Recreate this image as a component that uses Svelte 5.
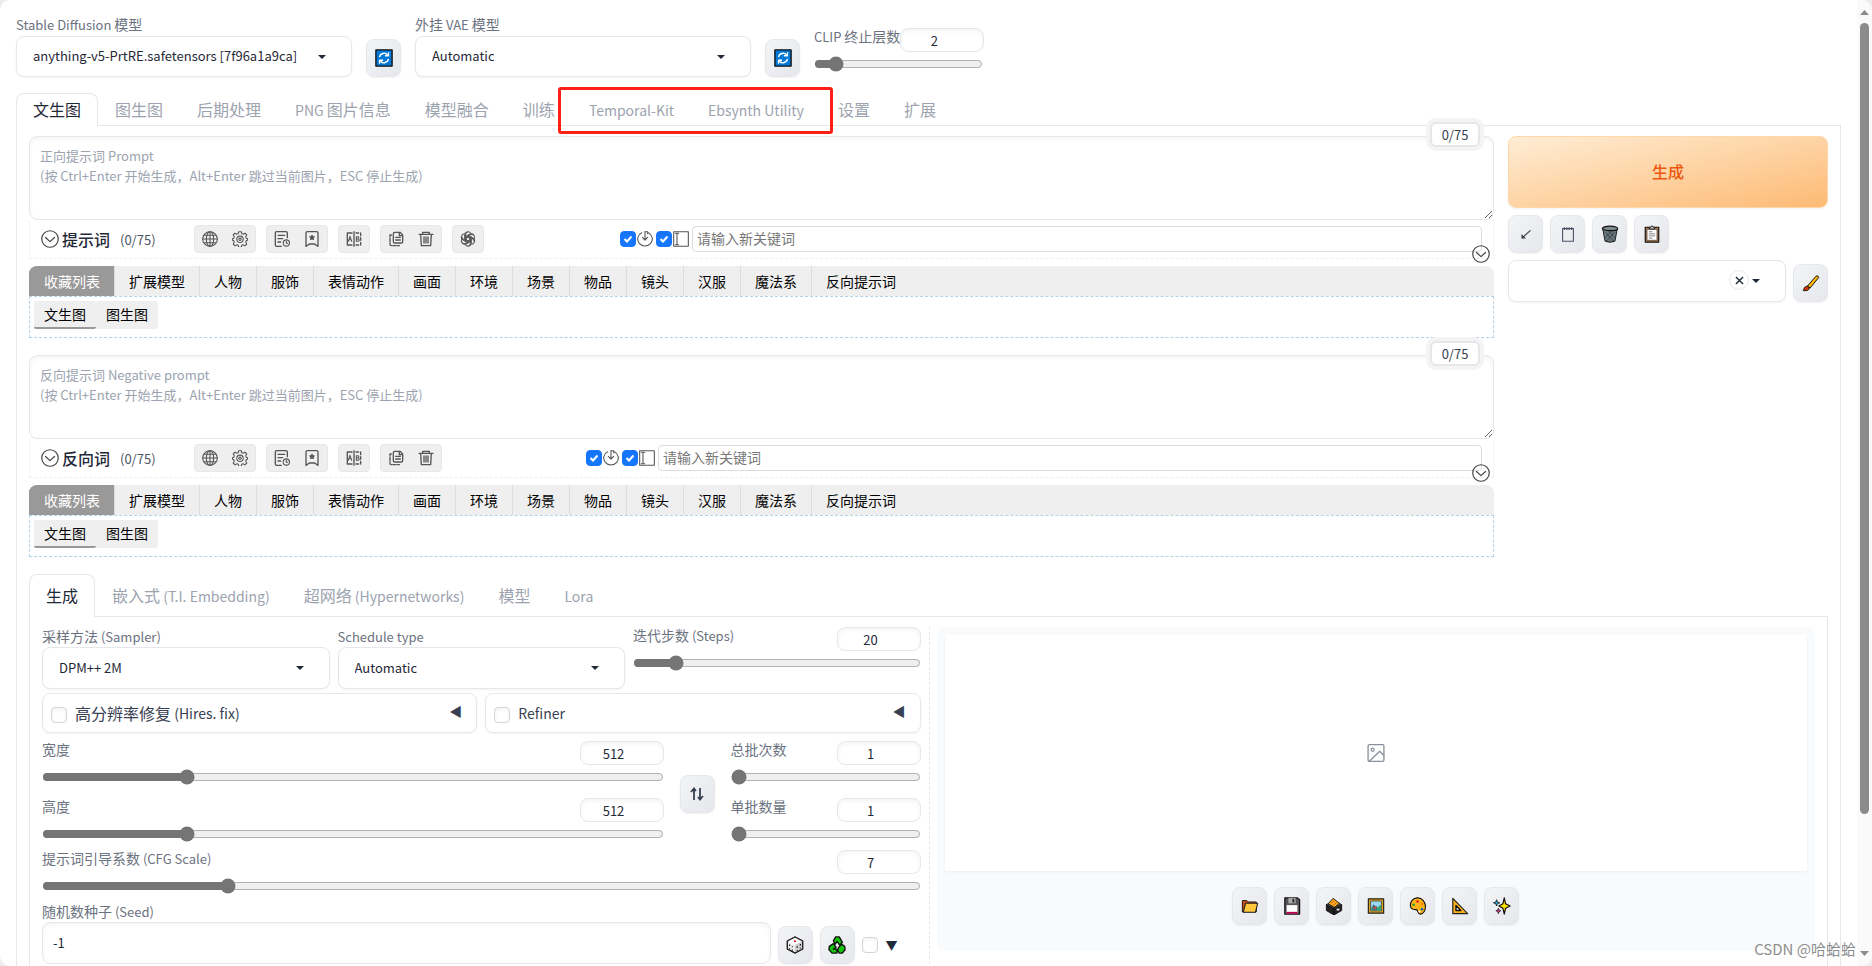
<script lang="ts">
  type PromptBlock = {
    id: string;
    title: string;
    placeholder: string;
    tools: string[][];
  };

  const hint = "(按 Ctrl+Enter 开始生成，Alt+Enter 跳过当前图片，ESC 停止生成)";

  const mainTabs = [
    "文生图", "图生图", "后期处理", "PNG 图片信息", "模型融合", "训练",
    "Temporal-Kit", "Ebsynth Utility", "设置", "扩展",
  ];
  const extraTabs = ["生成", "嵌入式 (T.I. Embedding)", "超网络 (Hypernetworks)", "模型", "Lora"];

  const groups = [
    "收藏列表", "扩展模型", "人物", "服饰", "表情动作", "画面", "环境",
    "场景", "物品", "镜头", "汉服", "魔法系", "反向提示词",
  ];
  const subGroups = ["文生图", "图生图"];

  const baseTools = [["globe", "gear"], ["history", "bookmark"], ["translate"], ["copy", "trash"]];

  const prompts: PromptBlock[] = [
    { id: "positive", title: "提示词", placeholder: "正向提示词 Prompt\n" + hint, tools: [...baseTools, ["openai"]] },
    { id: "negative", title: "反向词", placeholder: "反向提示词 Negative prompt\n" + hint, tools: baseTools },
  ];

  const promptActions = [
    { icon: "arrow", title: "读取上次参数" },
    { icon: "notepad", title: "额外网络" },
    { icon: "bin", title: "清空提示词" },
    { icon: "clipboard", title: "应用预设" },
  ];

  const galleryActions = [
    { icon: "folder", title: "打开输出目录" },
    { icon: "floppy", title: "保存图片" },
    { icon: "archive", title: "打包下载" },
    { icon: "picture", title: "发送到图生图" },
    { icon: "palette", title: "发送到重绘" },
    { icon: "ruler", title: "发送到后期处理" },
    { icon: "sparkles", title: "高清修复" },
  ];

  let activeTab = $state("文生图");
  let activeExtra = $state("生成");
  let clipSkip = $state(2);
  let steps = $state(20);
  let width = $state(512);
  let height = $state(512);
  let batchCount = $state(1);
  let batchSize = $state(1);
  let cfgScale = $state(7);
  let seed = $state("-1");

  function swapSize() {
    [width, height] = [height, width];
  }
</script>

<!-- Latin runs sit one step smaller than the Han characters beside them -->
{#snippet mixed(text: string)}
  {#each text.split(/([\x20-\x7e]+)/).filter(Boolean) as part}{#if /^[\x20-\x7e]+$/.test(part)}<span class="latin">{part}</span>{:else}{part}{/if}{/each}
{/snippet}

{#snippet lineIcon(name: string)}
  <svg class="line-icon" viewBox="0 0 24 24" fill="none" stroke="currentColor" stroke-width="1.6" stroke-linecap="round" stroke-linejoin="round" aria-hidden="true">
    {#if name === "globe"}
      <circle cx="12" cy="12" r="11" />
      <ellipse cx="12" cy="12" rx="5.5" ry="11" />
      <path d="M12 1v22M1 12h22M3 6.5h18M3 17.5h18" />
    {:else if name === "gear"}
      <path d="M10 1h4l.6 3 2.2.9 2.6-1.7 2.8 2.8-1.7 2.6.9 2.2 1.9.7v2.500l-1.900.700-.9 2.200 1.700 2.600-2.800 2.800-2.600-1.700-2.200.9-.6 3h-4l-.6-3-2.200-.9-2.600 1.700-2.800-2.800 1.700-2.600-.9-2.200-1.900-.7v-2.500l1.900-.7.9-2.200-1.700-2.600 2.800-2.800 2.600 1.700 2.200-.9z" />
      <circle cx="12" cy="12.500" r="4.8" />
      <circle cx="12" cy="12.500" r="1.8" />
    {:else if name === "history"}
      <path d="M20 10V3a2 2 0 0 0-2-2H4a2 2 0 0 0-2 2v18a2 2 0 0 0 2 2h7" stroke-width="2" />
      <path d="M6 6.5h10M6 11.5h7M6 16.5h4" stroke-width="2" />
      <circle cx="18.5" cy="18" r="4.7" />
      <path d="M18.5 15.5V18.5h2.2" />
    {:else if name === "bookmark"}
      <path d="M3 3a2 2 0 0 1 2-2h14a2 2 0 0 1 2 2v20l-5-3.5h-8L3 23z" stroke-width="2" />
      <path d="M12 6.500l1 2 2.300.3-1.600 1.600.4 2.300-2.100-1.100-2.100 1.100.4-2.300-1.600-1.600 2.300-.3z" fill="currentColor" />
    {:else if name === "translate"}
      <path d="M9 3H2v18h7M12 1v22" stroke-width="2" />
      <path d="M15 3h7v18h-7" stroke-width="2" stroke-dasharray="4 3" />
      <path d="M3.5 15.5L6 8l2.6 7.5M4.5 13h3.2M15.500 8.500v7h2.500a1.800 1.800 0 0 0 0-3.600h-2.500 2a1.700 1.700 0 0 0 0-3.400z" />
    {:else if name === "copy"}
      <path d="M8 4a2 2 0 0 1 2-2h8l4 4v10a2 2 0 0 1-2 2H10a2 2 0 0 1-2-2zM17 2v5h5M11.5 9.500h7M11.5 13.5h7" stroke-width="2" />
      <path d="M5 6H3v14a2 2 0 0 0 2 2h12" stroke-width="2" stroke-dasharray="5 2" />
    {:else if name === "trash"}
      <path d="M1.5 5h21M7 5V2h10v3M4 5l1 17h14l1-17M9 9v9M12 9v9M15 9v9" stroke-width="2" />
    {:else if name === "openai"}
      {#each [0, 60, 120, 180, 240, 300] as angle}
        <path d="M7 14V6.500a5 5 0 0 1 9-3.200M9.500 13V9l5.500-3.200a5 5 0 0 1 5 0" transform="rotate({angle} 12 12)" />
      {/each}
    {:else if name === "enter"}
      <path d="M7 2.6a11 10.5 0 1 0 10 0" />
      <path d="M12 1v12M8 9.5l4 4 4-4" />
      <path d="M12 1h4v3" />
    {:else if name === "cursor"}
      <path d="M1 1h22v22H1z" />
      <path d="M3.5 3.5h5M3.5 20.5h5M6 3.5v17" />
    {:else if name === "chevron"}
      <circle cx="12" cy="12" r="11" />
      <path d="M6 10l6 5.5 6-5.5" />
    {:else if name === "image"}
      <rect x="2.5" y="2" width="19" height="20" rx="1.5" />
      <circle cx="8" cy="8" r="1.8" />
      <path d="M4 22L16.5 10l5 5" />
    {/if}
  </svg>
{/snippet}

{#snippet emoji(name: string)}
  <svg class="emoji" viewBox="0 0 20 20" stroke-linejoin="round" aria-hidden="true">
    {#if name === "refresh"}
      <rect x="1" y="1" width="18" height="18" fill="#0078d7" stroke="#111" stroke-width="1.5" />
      <path d="M5 9a5.2 5.2 0 0 1 9-2.5M15 11a5.2 5.2 0 0 1-9 2.5" fill="none" stroke="#fff" stroke-width="1.6" />
      <path d="M15 3.5v4h-4M5 16.5v-4h4" fill="none" stroke="#fff" stroke-width="1.4" />
    {:else if name === "arrow"}
      <path d="M15 6L5.500 14.5" fill="none" stroke="#374151" stroke-width="1.3" />
      <path d="M5 10v5h5z" fill="#374151" />
    {:else if name === "notepad"}
      <rect x="4" y="4" width="12" height="14" fill="none" stroke="#4b4f66" stroke-width="1.2" />
      <path d="M6 2.5v3M8.7 2.5v3M11.3 2.5v3M14 2.5v3" stroke="#374151" />
    {:else if name === "bin"}
      <path d="M2 4.500L4.500 18q5.5 2.500 11 0L18 4.500z" fill="#69797e" stroke="#111" />
      <path d="M5 8l9 10M9 7l6 7M15 8L6 18M11 7l-6 7" stroke="#263238" stroke-width=".8" />
      <ellipse cx="10" cy="3.8" rx="8.5" ry="2.5" fill="#7d8b90" stroke="#111" stroke-width="1.3" />
    {:else if name === "clipboard"}
      <rect x="2.5" y="2.5" width="15" height="16.5" fill="#b97a4a" stroke="#111" stroke-width="1.3" />
      <rect x="4.5" y="4.8" width="11" height="12.2" fill="#fff" stroke="#222" stroke-width=".6" />
      <path d="M7 4.5V2.5h1.5L10 .8l1.500 1.700H13v2z" fill="#ccc" stroke="#111" />
      <path d="M6.5 7.5h4M6.5 9.8h7M6.5 12h7M6.5 14.5h4" stroke="#777" />
    {:else if name === "brush"}
      <path d="M6 13.500L15.500 2.500q2.500-1.500 3 1.500L9 15.500z" fill="#ffb900" stroke="#111" stroke-width="1.1" />
      <path d="M1.500 18.500Q2 14 5.500 13.500q2.800.3 2.800 3-2 2.800-6.800 2z" fill="#d83b01" stroke="#111" stroke-width="1" />
    {:else if name === "dice"}
      <path d="M10 1l8.5 4.5v9L10 19l-8.5-4.5v-9z" fill="#eee" stroke="#222" stroke-width="1.3" />
      <path d="M1.5 5.5L10 10l8.5-4.5L10 1z" fill="#fff" />
      <path d="M10 10v9l8.5-4.5v-9z" fill="#ccc" />
      <path d="M10 1l8.5 4.5v9L10 19l-8.5-4.5v-9z" fill="none" stroke="#222" stroke-width="1.3" />
      <ellipse cx="10" cy="5.8" rx="1.3" ry="1" fill="#e81123" />
      <path d="M4 9.5v1.500M7 15v1.500M4 13.5v1M7 11.5v1M12.5 11.5v1.5M16 9v1.5M12.5 15.5v1M16 13v1" stroke="#111" stroke-width="1.3" />
    {:else if name === "recycle"}
      <path d="M6 5.5L8.5 1h4L16 7l-3 3-3-4-2 3zM1.5 11.5L6 8.5l3 4-3 2h4v4.5H4.5L1 15zM18.5 11.5L15 9l-3 3.5-1.5 3L12.5 19H16l3-4z" fill="#16c60c" stroke="#111" stroke-width="1.5" />
    {:else if name === "folder"}
      <path d="M1.5 16.5V4h5l1.5 1.5h9V16.5z" fill="#ca5010" stroke="#111" />
      <path d="M2.5 17L5 7h13.5L16 17z" fill="#ffc83d" stroke="#222" stroke-width="1.2" />
    {:else if name === "floppy"}
      <path d="M2 1h14l2.5 2v16H2z" fill="#555" stroke="#111" stroke-width="1.3" />
      <rect x="6" y="1" width="8" height="6" fill="#aaa" />
      <rect x="10.5" y="2" width="2" height="4" fill="#222" />
      <rect x="4" y="9" width="12" height="9" fill="#fff" />
      <path d="M4 17.5h12" stroke="#c30052" stroke-width="2" />
    {:else if name === "archive"}
      <path d="M1.5 8.5L10 13v7l-8.5-5zM18.5 8.5L10 13v7l8.5-5z" fill="#222" stroke="#111" />
      <path d="M1.5 8.5L10 4l8.5 4.5L10 13z" fill="#555" stroke="#111" />
      <path d="M3.5 7.5L9 1.500l7 5.500-5.5 4.5z" fill="#ffb020" stroke="#111" />
      <path d="M6.5 7l4-3M9 9l4-3" stroke="#ca5010" />
      <rect x="13" y="13" width="3" height="2" fill="#eee" />
    {:else if name === "picture"}
      <rect x="1.5" y="2" width="17" height="16" fill="#e3a51a" stroke="#222" stroke-width="1.3" />
      <rect x="4" y="4.5" width="12" height="11" fill="#9bd8f5" stroke="#333" stroke-width=".8" />
      <path d="M4.5 15v-3l4-2 3 2 3-3 1 1v5z" fill="#30a46c" />
      <path d="M6 15v-5l1.500-2 1.500 2h2v5z" fill="#5d6570" />
      <path d="M8 11h2v2H8z" fill="#e74856" />
    {:else if name === "palette"}
      <path d="M9 1C4 1.5 1 5.5 1.500 10s4.5 4 6.5 4 1.5 5 4.5 5c4 0 6-4.5 5.8-9S14.500.5 9 1z" fill="#ffb31a" stroke="#111" stroke-width="1.2" />
      <circle cx="5" cy="8.5" r="1.4" fill="#16a020" />
      <circle cx="9.5" cy="5" r="1.4" fill="#e81123" />
      <circle cx="14.5" cy="7.5" r="1.3" fill="#ff7b00" />
      <circle cx="14.5" cy="13.5" r="1.4" fill="#0063b1" />
      <circle cx="11.5" cy="16" r="1.1" fill="#fff" />
    {:else if name === "ruler"}
      <path d="M2 1.5v17h16.5z" fill="#ffb31a" stroke="#222" stroke-width="1.3" />
      <path d="M5.5 9.5v5.5h5.5z" fill="#eee" stroke="#111" stroke-width="1.5" />
    {:else if name === "sparkles"}
      <path d="M12.5 1l1.500 6.500 5 2.500-5 2.500-1.500 6.500-1.500-6.500L6.500 10l4.500-2.500z" fill="#fce100" stroke="#111" stroke-width="1.3" />
      <path d="M4 3l.9 2.600L7.500 6.500l-2.600.9L4 10l-.9-2.600L.5 6.500l2.600-.9z" fill="#31b6e7" stroke="#111" stroke-width=".9" />
      <path d="M6 12.5l.8 2 2 .8-2 .8-.8 2.400-.8-2.400-2-.8 2-.8z" fill="#e3a" stroke="#111" stroke-width=".8" />
    {/if}
  </svg>
{/snippet}

{#snippet toolButton(icon: string, title: string)}
  <button class="tool" type="button" {title} aria-label={title}>{@render emoji(icon)}</button>
{/snippet}

{#snippet dropdown(id: string, label: string, value: string)}
  <div class="field">
    <label for={id}>{@render mixed(label)}</label>
    <div class="select-wrap">
      <select {id}><option>{value}</option></select>
      <svg class="caret" viewBox="0 0 8 4" aria-hidden="true"><path d="M0 0h8L4 4z" /></svg>
    </div>
  </div>
{/snippet}

<div class="window">
  <main>
    <header class="quick">
      {@render dropdown("sd-model", "Stable Diffusion 模型", "anything-v5-PrtRE.safetensors [7f96a1a9ca]")}
      {@render toolButton("refresh", "刷新模型")}
      {@render dropdown("sd-vae", "外挂 VAE 模型", "Automatic")}
      {@render toolButton("refresh", "刷新 VAE")}
      <div class="slider clip">
        <div class="slider-head">
          <label for="clip-skip">{@render mixed("CLIP 终止层数")}</label>
          <input id="clip-skip" class="number" type="text" bind:value={clipSkip} />
        </div>
        <input type="range" min="1" max="12" bind:value={clipSkip} aria-label="CLIP 终止层数" />
      </div>
    </header>

    <nav class="tabs">
      {#each mainTabs as tab}
        <button type="button" class:active={tab === activeTab} onclick={() => (activeTab = tab)}>{@render mixed(tab)}</button>
      {/each}
      <span class="marker"></span>
    </nav>

    <div class="panel">
      <div class="top">
        <div class="prompts">
          {#each prompts as block (block.id)}
            <section class="prompt {block.id}">
              <span class="counter">0/75</span>
              <textarea placeholder={block.placeholder} aria-label={block.title}></textarea>
              <div class="bar">
                <div class="bar-title">
                  {@render lineIcon("chevron")}
                  <strong>{block.title}</strong>
                  <span>(0/75)</span>
                </div>
                {#each block.tools as group}
                  <div class="tool-group">
                    {#each group as name}
                      <button type="button" aria-label={name}>{@render lineIcon(name)}</button>
                    {/each}
                  </div>
                {/each}
                <div class="entry">
                  <input type="checkbox" checked aria-label="回车添加" />
                  {@render lineIcon("enter")}
                  <input type="checkbox" checked aria-label="自动输入" />
                  {@render lineIcon("cursor")}
                  <input class="keyword" type="text" placeholder="请输入新关键词" aria-label="请输入新关键词" />
                </div>
                <button class="fold" type="button" aria-label="展开">{@render lineIcon("chevron")}</button>
              </div>
              <div class="group-tabs">
                {#each groups as group, i}
                  <button type="button" class:active={i === 0}>{group}</button>
                {/each}
              </div>
              <div class="group-body">
                {#each subGroups as sub, i}
                  <button type="button" class:active={i === 0}>{sub}</button>
                {/each}
              </div>
            </section>
          {/each}
        </div>

        <aside class="actions">
          <button class="generate" type="button">生成</button>
          <div class="tool-row">
            {#each promptActions as action}
              {@render toolButton(action.icon, action.title)}
            {/each}
          </div>
          <div class="styles">
            <div class="select-wrap">
              <select aria-label="预设样式"><option></option></select>
              <button class="clear" type="button" aria-label="清除">
                <svg viewBox="0 0 10 10" aria-hidden="true"><path d="M1 1l8 8M9 1L1 9" /></svg>
              </button>
              <svg class="caret" viewBox="0 0 8 4" aria-hidden="true"><path d="M0 0h8L4 4z" /></svg>
            </div>
            {@render toolButton("brush", "编辑预设样式")}
          </div>
        </aside>
      </div>

      <nav class="tabs tall">
        {#each extraTabs as tab}
          <button type="button" class:active={tab === activeExtra} onclick={() => (activeExtra = tab)}>{@render mixed(tab)}</button>
        {/each}
      </nav>

      <div class="panel inner">
        <div class="settings">
          <div class="compact">
            <div class="thirds">
              {@render dropdown("sampler", "采样方法 (Sampler)", "DPM++ 2M")}
              {@render dropdown("scheduler", "Schedule type", "Automatic")}
              <div class="slider">
                <div class="slider-head">
                  <label for="steps">{@render mixed("迭代步数 (Steps)")}</label>
                  <input id="steps" class="number" type="text" bind:value={steps} />
                </div>
                <input type="range" min="1" max="150" bind:value={steps} aria-label="Steps" />
              </div>
            </div>
            <div class="halves">
              <div class="accordion">
                <label><input class="box" type="checkbox" />{@render mixed("高分辨率修复 (Hires. fix)")}</label>
                <button type="button" aria-label="展开">◀</button>
              </div>
              <div class="accordion">
                <label><input class="box" type="checkbox" />{@render mixed("Refiner")}</label>
                <button type="button" aria-label="展开">◀</button>
              </div>
            </div>
          </div>

          <div class="size">
            <div class="pair">
              <div class="slider">
                <div class="slider-head">
                  <label for="width">宽度</label>
                  <input id="width" class="number" type="text" bind:value={width} />
                </div>
                <input type="range" min="64" max="2048" step="8" bind:value={width} aria-label="宽度" />
              </div>
              <div class="slider">
                <div class="slider-head">
                  <label for="height">高度</label>
                  <input id="height" class="number" type="text" bind:value={height} />
                </div>
                <input type="range" min="64" max="2048" step="8" bind:value={height} aria-label="高度" />
              </div>
            </div>
            <button class="tool" type="button" title="交换宽高" aria-label="交换宽高" onclick={swapSize}>
              <svg class="swap" viewBox="0 0 14 14" aria-hidden="true"><path d="M4 13V2M1 5l3-3.5L6 4M10 1v11M13 9l-3 3.5L8 10" /></svg>
            </button>
            <div class="pair batch">
              <div class="slider">
                <div class="slider-head">
                  <label for="batch-count">总批次数</label>
                  <input id="batch-count" class="number" type="text" bind:value={batchCount} />
                </div>
                <input type="range" min="1" max="100" bind:value={batchCount} aria-label="总批次数" />
              </div>
              <div class="slider">
                <div class="slider-head">
                  <label for="batch-size">单批数量</label>
                  <input id="batch-size" class="number" type="text" bind:value={batchSize} />
                </div>
                <input type="range" min="1" max="8" bind:value={batchSize} aria-label="单批数量" />
              </div>
            </div>
          </div>

          <div class="slider">
            <div class="slider-head">
              <label for="cfg">{@render mixed("提示词引导系数 (CFG Scale)")}</label>
              <input id="cfg" class="number" type="text" bind:value={cfgScale} />
            </div>
            <input type="range" min="1" max="30" step="0.5" bind:value={cfgScale} aria-label="CFG Scale" />
          </div>

          <div class="field">
            <label for="seed">{@render mixed("随机数种子 (Seed)")}</label>
            <div class="seed-row">
              <input id="seed" class="text" type="text" bind:value={seed} />
              {@render toolButton("dice", "随机种子")}
              {@render toolButton("recycle", "沿用上次种子")}
              <label class="extra"><input class="box" type="checkbox" aria-label="更多种子选项" /><span>▼</span></label>
            </div>
          </div>
        </div>

        <div class="gallery">
          <div class="preview">{@render lineIcon("image")}</div>
          <div class="gallery-tools">
            {#each galleryActions as action}
              {@render toolButton(action.icon, action.title)}
            {/each}
          </div>
        </div>
      </div>
    </div>
  </main>

  <div class="scrollbar">
    <svg viewBox="0 0 9 5" aria-hidden="true"><path d="M0 5h9L4.5 0z" /></svg>
    <div class="thumb-track"><div class="thumb"></div></div>
    <svg viewBox="0 0 9 5" aria-hidden="true"><path d="M0 0h9L4.5 5z" /></svg>
  </div>
  <div class="watermark">CSDN @哈蛤蛤</div>
</div>

<style>
  :global(body) {
    background: #ececec;
    overflow: hidden;
  }

  .window {
    position: relative;
    display: flex;
    height: 100vh;
    overflow: hidden;
    border-radius: 10px;
    background: #fff;
    color: #1f2937;
    font-family: "Noto Sans CJK SC", "Noto Sans", sans-serif;
    font-size: 14px;
  }

  .window * {
    box-sizing: border-box;
  }

  main {
    flex: 1;
    min-width: 0;
    display: flex;
    flex-direction: column;
    padding: 15px 16px 0;
  }

  button, input, select, textarea {
    font-family: inherit;
    font-size: 14px;
    color: inherit;
    margin: 0;
  }

  button {
    border: none;
    background: none;
    padding: 0;
    cursor: pointer;
  }

  label {
    color: #6b7280;
    line-height: 18px;
    white-space: nowrap;
  }

  .latin {
    font-size: 13px;
    line-height: 1;
    white-space: pre;
  }

  .line-icon {
    width: 16px;
    height: 16px;
    flex: none;
    display: block;
    color: #555;
  }

  .emoji {
    width: 18px;
    height: 18px;
    display: block;
  }

  /* header */
  .quick {
    display: flex;
    align-items: flex-end;
    gap: 14px;
    margin-bottom: 16px;
  }

  .quick .field {
    flex: 0 0 336px;
  }

  .quick select {
    height: 41px;
  }

  .clip {
    width: 169px;
    align-self: flex-start;
    margin-top: 13px;
  }

  .field label {
    display: block;
    height: 18px;
    margin-bottom: 2px;
  }

  .quick .field label {
    margin-bottom: 3px;
  }

  .select-wrap {
    position: relative;
    flex: 1;
  }

  select, .text {
    width: 100%;
    height: 42px;
    padding: 0 16px 2px;
    border: 1px solid #e5e7eb;
    border-radius: 8px;
    background: #fff;
    box-shadow: 0 1px 2px rgba(0, 0, 0, 0.05);
    appearance: none;
    font-size: 13px;
    display: block;
  }

  .text {
    padding: 0 10px 2px;
    box-shadow: inset 0 2px 4px rgba(0, 0, 0, 0.05);
  }

  .caret {
    position: absolute;
    right: 26px;
    top: 19px;
    width: 8px;
    height: 4px;
    fill: #1f2937;
    pointer-events: none;
  }

  .tool {
    width: 35px;
    height: 38px;
    flex: none;
    display: flex;
    align-items: center;
    justify-content: center;
    border: 1px solid #e5e7eb;
    border-radius: 8px;
    background: linear-gradient(to bottom right, #f3f4f6, #e5e7eb);
    box-shadow: 0 1px 2px rgba(0, 0, 0, 0.05);
  }

  .slider-head {
    display: flex;
    justify-content: space-between;
    align-items: flex-start;
    height: 24px;
  }

  .slider-head label {
    line-height: 16px;
  }

  .number {
    width: 84px;
    height: 24px;
    flex: none;
    padding: 0 16px 0 0;
    border: 1px solid #e5e7eb;
    border-radius: 8px;
    background: #fff;
    box-shadow: inset 0 2px 4px rgba(0, 0, 0, 0.05);
    text-align: center;
    font-size: 13px;
  }

  input[type="range"] {
    display: block;
    width: 100%;
    height: 16px;
    margin-top: 4px;
    accent-color: #757575;
  }

  input[type="checkbox"] {
    appearance: none;
    width: 16px;
    height: 16px;
    flex: none;
    border: 1px solid #d1d5db;
    border-radius: 4px;
    background: #fff;
    box-shadow: inset 0 2px 4px rgba(0, 0, 0, 0.05);
  }

  input[type="checkbox"]:checked {
    border-color: #1677ff;
    background: #1677ff url("data:image/svg+xml,%3Csvg xmlns='http://www.w3.org/2000/svg' viewBox='0 0 14 14'%3E%3Cpath d='M3.500 7l2.500 2.500 4.500-5' fill='none' stroke='white' stroke-width='2'/%3E%3C/svg%3E") center / 14px no-repeat;
  }

  /* tabs */
  .tabs {
    position: relative;
    display: flex;
    height: 33px;
    flex: none;
    border-bottom: 1px solid #e5e7eb;
  }

  .tabs.tall {
    height: 43px;
    margin-top: 17px;
  }

  .tabs button {
    height: calc(100% + 1px);
    padding: 0 16px 2px;
    border: 1px solid transparent;
    border-bottom: none;
    border-radius: 8px 8px 0 0;
    color: #9ca3af;
    font-size: 16px;
    line-height: 24px;
    white-space: nowrap;
  }

  .tabs button.active {
    border-color: #e5e7eb;
    background: #fff;
    color: #1f2937;
  }

  .tabs .latin,
  .accordion .latin {
    font-size: 14px;
  }

  .marker {
    position: absolute;
    left: 542px;
    top: -6px;
    width: 275px;
    height: 47px;
    border: 3px solid #ff1f14;
    border-radius: 3px;
    pointer-events: none;
  }

  .panel {
    flex: 1 0 auto;
    padding: 10px 12px 0;
    border: solid #e5e7eb;
    border-width: 0 1px;
  }

  .top {
    display: grid;
    grid-template-columns: minmax(0, 1fr) 320px;
    gap: 14px;
  }

  .prompts {
    display: flex;
    flex-direction: column;
    gap: 17px;
  }

  .prompt {
    position: relative;
  }

  .counter {
    position: absolute;
    right: 14px;
    top: -14px;
    width: 50px;
    border: 2px solid #e5e7eb;
    border-radius: 6px;
    background: #fff;
    box-shadow: 0 0 0 4px #f4f4f4;
    color: #374151;
    font-size: 13px;
    line-height: 21px;
    text-align: center;
  }

  textarea {
    display: block;
    width: 100%;
    height: 84px;
    padding: 9px 10px;
    border: 1px solid #e5e7eb;
    border-radius: 8px;
    background: #fff;
    box-shadow: inset 0 2px 4px rgba(0, 0, 0, 0.05);
    font-size: 13px;
    line-height: 20px;
    resize: vertical;
  }

  textarea::placeholder {
    color: #9ca3af;
  }

  .bar {
    position: relative;
    display: flex;
    align-items: center;
    gap: 10px;
    height: 39px;
    margin-bottom: 7px;
    padding: 0 11px;
    border-bottom: 1px dashed #eee;
    border-left: 1px solid #f3f4f6;
    border-right: 1px solid #f3f4f6;
  }

  .bar-title {
    display: flex;
    align-items: center;
    width: 143px;
    gap: 3px;
    white-space: nowrap;
  }

  .bar-title strong {
    margin-right: 7px;
    font-size: 16px;
    font-weight: 500;
    line-height: 24px;
  }

  .bar-title span {
    font-size: 13px;
    color: #4b5563;
  }

  .bar-title .line-icon,
  .fold .line-icon {
    width: 18px;
    height: 18px;
    color: #444;
  }

  .tool-group {
    display: flex;
    gap: 14px;
    height: 28px;
    padding: 0 7px;
    align-items: center;
    border: 1px solid #e5e7eb;
    border-radius: 4px;
    background: #efefef;
  }

  .entry {
    display: flex;
    align-items: center;
    gap: 1px;
    flex: 0 1 862px;
    margin-left: auto;
  }

  .negative .entry {
    flex-basis: 896px;
  }

  .entry .line-icon {
    margin-right: 2px;
  }

  .keyword {
    flex: 1;
    min-width: 0;
    height: 26px;
    padding: 0 4px 3px;
    border: 1px solid #ddd;
    border-radius: 4px;
    background: #fff;
  }

  .keyword::placeholder {
    color: #777;
  }

  .fold {
    position: absolute;
    right: 3px;
    bottom: -5px;
  }

  .group-tabs {
    display: flex;
    height: 30px;
    overflow: hidden;
    border-radius: 8px 8px 0 0;
    background: #efefef;
  }

  .group-tabs button {
    padding: 0 14px 1px;
    border-left: 1px solid #ddd;
    color: #000;
    white-space: nowrap;
  }

  .group-tabs button.active {
    border-left-color: #999;
    background: #999;
    color: #fff;
  }

  .group-body {
    display: flex;
    align-items: flex-start;
    height: 42px;
    padding: 4px;
    border: 1px dashed #b7d0e2;
  }

  .group-body button {
    height: 28px;
    padding: 0 10px 1px;
    border-bottom: 2px solid #efefef;
    border-radius: 2px;
    background: #efefef;
    color: #000;
  }

  .group-body button.active {
    border-bottom-color: #999;
  }

  /* right column */
  .actions {
    display: flex;
    flex-direction: column;
    gap: 7px;
  }

  .generate {
    height: 72px;
    padding-bottom: 2px;
    border: 1px solid #fed7aa;
    border-radius: 8px;
    background: linear-gradient(to bottom right, #ffedd5, #fdba74);
    box-shadow: 0 1px 2px rgba(0, 0, 0, 0.05);
    color: #ea580c;
    font-size: 16px;
    font-weight: 500;
  }

  .tool-row {
    display: flex;
    gap: 7px;
  }

  .styles {
    display: flex;
    align-items: flex-end;
    gap: 7px;
  }

  .clear {
    position: absolute;
    right: 37px;
    top: 10px;
    width: 20px;
    height: 20px;
    display: flex;
    align-items: center;
    justify-content: center;
    border: 1px solid #e5e7eb;
    border-radius: 50%;
  }

  .clear svg {
    width: 9px;
    height: 9px;
    fill: none;
    stroke: #1f2937;
    stroke-width: 1.5;
  }

  /* generation settings */
  .inner {
    display: grid;
    grid-template-columns: minmax(0, 1fr) minmax(0, 1fr);
    align-items: start;
    gap: 16px;
    padding: 10px 12px 0;
  }

  .settings {
    position: relative;
    display: flex;
    flex-direction: column;
    gap: 8px;
    padding-bottom: 40px;
  }

  .settings::after {
    content: "";
    position: absolute;
    right: -9px;
    top: 0;
    bottom: 0;
    border-right: 1px dashed #e5e7eb;
  }

  .compact {
    display: flex;
    flex-direction: column;
    gap: 4px;
  }

  .thirds {
    display: grid;
    grid-template-columns: repeat(3, minmax(0, 1fr));
    gap: 8px;
  }

  .halves {
    display: grid;
    grid-template-columns: repeat(2, minmax(0, 1fr));
    gap: 8px;
  }

  .accordion {
    display: flex;
    align-items: center;
    justify-content: space-between;
    height: 40px;
    padding: 0 14px 0 8px;
    border: 1px solid #e5e7eb;
    border-radius: 8px;
    box-shadow: 0 1px 2px rgba(0, 0, 0, 0.05);
  }

  .accordion label {
    display: flex;
    align-items: center;
    color: #374151;
    font-size: 16px;
    line-height: 24px;
  }

  .accordion .box {
    margin: 3px 8px 0 0;
  }

  .accordion button {
    padding-bottom: 4px;
    color: #374151;
    font-size: 13px;
    line-height: 16px;
  }

  .size {
    display: flex;
    align-items: center;
    gap: 16px;
  }

  .size .tool {
    margin-top: 5px;
  }

  .pair {
    flex: 1;
    display: flex;
    flex-direction: column;
    gap: 13px;
  }

  .pair.batch {
    flex: 0 0 190px;
  }

  .swap {
    width: 14px;
    height: 14px;
    fill: none;
    stroke: #374151;
    stroke-width: 1.8;
  }

  .seed-row {
    display: flex;
    align-items: flex-end;
    gap: 7px;
  }

  .seed-row .text {
    flex: 1;
    min-width: 0;
  }

  .seed-row .extra {
    display: flex;
    align-items: center;
    gap: 8px;
    width: 59px;
    height: 38px;
    margin: 0;
    color: #1f2937;
    font-size: 12px;
  }

  .gallery {
    padding: 8px;
    border-radius: 8px;
    background: #f9fafb;
  }

  .preview {
    display: flex;
    align-items: center;
    justify-content: center;
    height: 236px;
    background: #fff;
    box-shadow: 0 1px 2px rgba(0, 0, 0, 0.05);
  }

  .preview .line-icon {
    width: 20px;
    height: 20px;
    color: #8b919d;
  }

  .gallery-tools {
    display: flex;
    justify-content: center;
    gap: 7px;
    padding: 16px 0 18px;
  }

  /* window chrome */
  .scrollbar {
    display: flex;
    flex-direction: column;
    align-items: center;
    gap: 8px;
    width: 15px;
    padding: 10px 0;
    background: #fafafa;
  }

  .scrollbar svg {
    width: 9px;
    height: 5px;
    flex: none;
    fill: #8b8b8b;
  }

  .thumb-track {
    flex: 1;
  }

  .thumb {
    width: 9px;
    height: 86%;
    border-radius: 5px;
    background: #8b8b8b;
  }

  .watermark {
    position: absolute;
    right: 16px;
    bottom: 5px;
    color: #8f8f8f;
    font-size: 15px;
    line-height: 24px;
    text-shadow: 1px 1px 0 #fff;
  }
</style>
